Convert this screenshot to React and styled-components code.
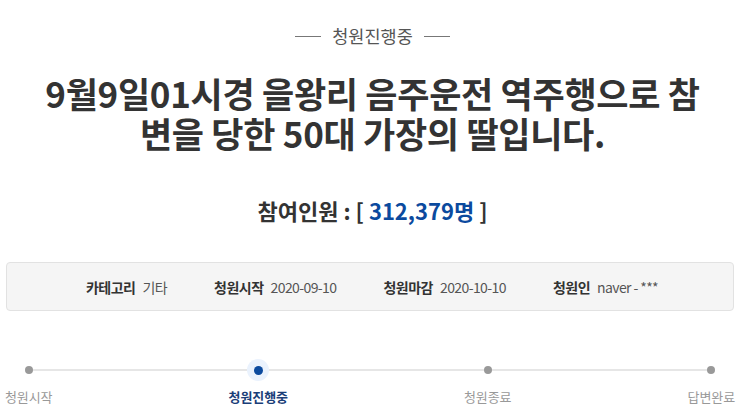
import React from 'react';
import styled, { createGlobalStyle } from 'styled-components';

const GlobalStyle = createGlobalStyle`
  body {
    margin: 0;
    background: #fff;
    font-family: "Noto Sans CJK KR", "Noto Sans", sans-serif;
    color: #333;
  }
`;

const Page = styled.div`
  width: 745px;
  padding: 24px 0 0;
  box-sizing: border-box;
`;

const Status = styled.div`
  display: flex;
  align-items: center;
  justify-content: center;
  gap: 11px;
  font-size: 17.5px;
  line-height: 24px;
  color: #555;

  &::before,
  &::after {
    content: '';
    width: 26px;
    height: 1px;
    background: #777;
  }
`;

const Title = styled.h1`
  margin: 25px 0 0;
  text-align: center;
  font-size: 35px;
  line-height: 40px;
  font-weight: 700;
  letter-spacing: -0.3px;
  color: #333;
`;

const Count = styled.div`
  margin-top: 42px;
  text-align: center;
  font-size: 22px;
  line-height: 30px;
  font-weight: 700;
  color: #333;
`;

const Number = styled.span`
  color: #0b4a9e;
`;

const InfoBox = styled.div`
  margin: 37px 11px 0 6px;
  height: 49px;
  box-sizing: border-box;
  border: 1px solid #e2e2e2;
  border-radius: 4px;
  background: #f5f5f5;
  display: flex;
  align-items: center;
  justify-content: center;
  gap: 47px;
  padding-left: 4px;
`;

const InfoItem = styled.div`
  display: flex;
  align-items: center;
  gap: 7px;
  font-size: 14px;
`;

const InfoLabel = styled.span`
  font-weight: 700;
  color: #333;
  letter-spacing: -0.5px;
`;

const InfoValue = styled.span`
  color: #555;
  letter-spacing: -0.6px;
`;

const Steps = styled.div`
  position: relative;
  margin-top: 49px;
  padding: 0 10px 0 5px;
  display: flex;
  justify-content: space-between;

  &::before {
    content: '';
    position: absolute;
    top: 9px;
    left: 30px;
    right: 33px;
    height: 2px;
    background: #e6e6e6;
  }
`;

const Step = styled.div`
  position: relative;
  display: flex;
  flex-direction: column;
  align-items: center;
`;

const DotWrap = styled.div`
  width: 22px;
  height: 22px;
  border-radius: 50%;
  display: flex;
  align-items: center;
  justify-content: center;
  background: ${p => (p.$active ? '#eaf2fd' : 'transparent')};
  margin-top: -1px;
`;

const Dot = styled.span`
  width: ${p => (p.$active ? 9 : 8)}px;
  height: ${p => (p.$active ? 9 : 8)}px;
  border-radius: 50%;
  background: ${p => (p.$active ? '#0b4a9e' : '#999')};
`;

const StepLabel = styled.span`
  margin-top: 6px;
  font-size: 13px;
  line-height: 20px;
  letter-spacing: -0.1px;
  font-weight: ${p => (p.$active ? 700 : 400)};
  color: ${p => (p.$active ? '#1a3e78' : '#999')};
`;

const info = [
  ['카테고리', '기타'],
  ['청원시작', '2020-09-10'],
  ['청원마감', '2020-10-10'],
  ['청원인', 'naver - ***'],
];

const steps = ['청원시작', '청원진행중', '청원종료', '답변완료'];

export default function App() {
  return (
    <Page>
      <GlobalStyle />
      <Status>청원진행중</Status>
      <Title>
        9월9일01시경 을왕리 음주운전 역주행으로 참<br />
        변을 당한 50대 가장의 딸입니다.
      </Title>
      <Count>
        참여인원 : [ <Number>312,379명</Number> ]
      </Count>
      <InfoBox>
        {info.map(([label, value]) => (
          <InfoItem key={label}>
            <InfoLabel>{label}</InfoLabel>
            <InfoValue>{value}</InfoValue>
          </InfoItem>
        ))}
      </InfoBox>
      <Steps>
        {steps.map((s, i) => (
          <Step key={s}>
            <DotWrap $active={i === 1}>
              <Dot $active={i === 1} />
            </DotWrap>
            <StepLabel $active={i === 1}>{s}</StepLabel>
          </Step>
        ))}
      </Steps>
    </Page>
  );
}
